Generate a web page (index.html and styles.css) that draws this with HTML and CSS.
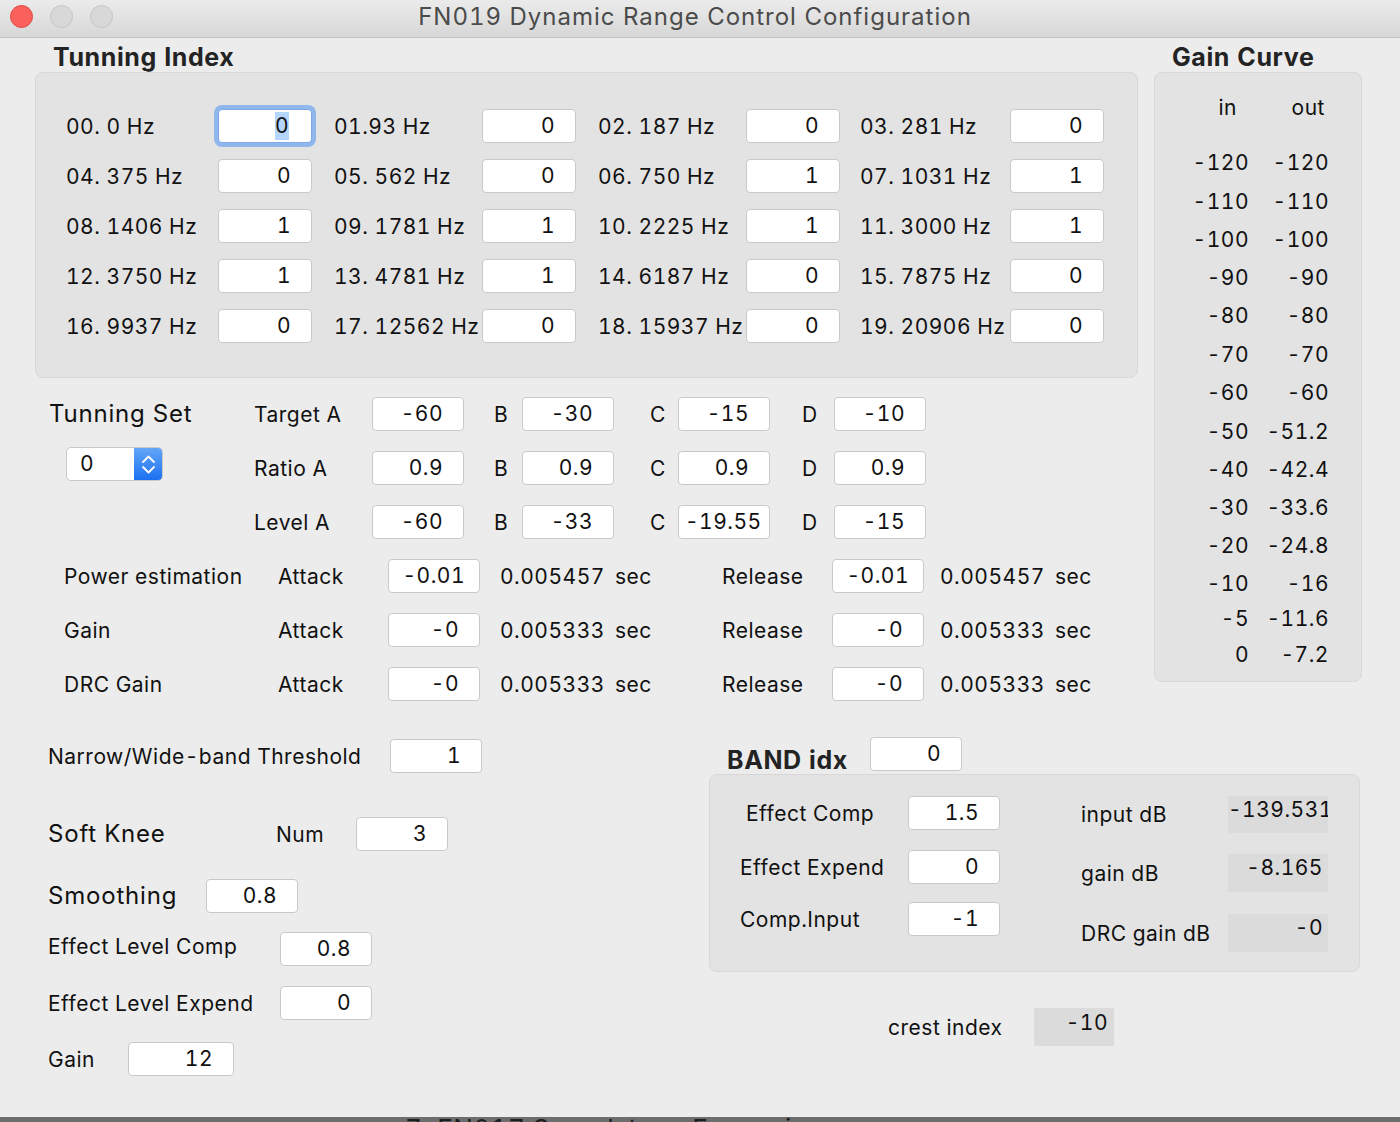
FILE: index.html
```html
<!DOCTYPE html>
<html lang="en">
<head>
<meta charset="utf-8">
<title>FN019 Dynamic Range Control Configuration</title>
<link rel="stylesheet" href="styles.css">
</head>
<body>
<div class="window">
  <div class="titlebar">
    <div class="lights"><span class="light red"></span><span class="light"></span><span class="light"></span></div>
    <div class="title">FN019 Dynamic Range Control Configuration</div>
    <div></div>
  </div>
  <div class="content">
    <div class="upper">
      <div class="upper-left">
        <h2 class="heading">Tunning Index</h2>
        <div class="panel tuning">
          <div class="tgrid">
            <span class="lbl">00. 0 Hz</span><span class="field focus"><span class="sel">0</span></span>
            <span class="lbl">01.93 Hz</span><span class="field">0</span>
            <span class="lbl">02. 187 Hz</span><span class="field">0</span>
            <span class="lbl">03. 281 Hz</span><span class="field">0</span>
            <span class="lbl">04. 375 Hz</span><span class="field">0</span>
            <span class="lbl">05. 562 Hz</span><span class="field">0</span>
            <span class="lbl">06. 750 Hz</span><span class="field">1</span>
            <span class="lbl">07. 1031 Hz</span><span class="field">1</span>
            <span class="lbl">08. 1406 Hz</span><span class="field">1</span>
            <span class="lbl">09. 1781 Hz</span><span class="field">1</span>
            <span class="lbl">10. 2225 Hz</span><span class="field">1</span>
            <span class="lbl">11. 3000 Hz</span><span class="field">1</span>
            <span class="lbl">12. 3750 Hz</span><span class="field">1</span>
            <span class="lbl">13. 4781 Hz</span><span class="field">1</span>
            <span class="lbl">14. 6187 Hz</span><span class="field">0</span>
            <span class="lbl">15. 7875 Hz</span><span class="field">0</span>
            <span class="lbl">16. 9937 Hz</span><span class="field">0</span>
            <span class="lbl">17. 12562 Hz</span><span class="field">0</span>
            <span class="lbl">18. 15937 Hz</span><span class="field">0</span>
            <span class="lbl">19. 20906 Hz</span><span class="field">0</span>
          </div>
        </div>

        <div class="tset">
          <div class="tset-left">
            <div class="big">Tunning Set</div>
            <div class="spinner">
              <span class="spin-val">0</span>
              <span class="spin-btn">
                <svg width="29" height="34" viewBox="0 0 29 34" aria-hidden="true">
                  <path d="M9 15 L14.5 9.5 L20 15" fill="none" stroke="#fff" stroke-width="1.8" stroke-linecap="round" stroke-linejoin="round"/>
                  <path d="M9 20 L14.5 25.5 L20 20" fill="none" stroke="#fff" stroke-width="1.8" stroke-linecap="round" stroke-linejoin="round"/>
                </svg>
              </span>
            </div>
          </div>
          <div class="tset-grid">
            <span class="lbl">Target A</span><span class="field">-60</span>
            <span class="lbl ltr-b">B</span><span class="field">-30</span>
            <span class="lbl ltr-c">C</span><span class="field">-15</span>
            <span class="lbl ltr-d">D</span><span class="field">-10</span>

            <span class="lbl">Ratio A</span><span class="field">0.9</span>
            <span class="lbl ltr-b">B</span><span class="field">0.9</span>
            <span class="lbl ltr-c">C</span><span class="field">0.9</span>
            <span class="lbl ltr-d">D</span><span class="field">0.9</span>

            <span class="lbl">Level A</span><span class="field">-60</span>
            <span class="lbl ltr-b">B</span><span class="field">-33</span>
            <span class="lbl ltr-c">C</span><span class="field field-left">-19.55</span>
            <span class="lbl ltr-d">D</span><span class="field">-15</span>
          </div>
        </div>

        <div class="timing">
          <span class="lbl">Power estimation</span><span class="lbl">Attack</span><span class="field tight">-0.01</span><span class="clip">0.00545759</span><span class="lbl">sec</span>
          <span class="lbl">Release</span><span class="field tight">-0.01</span><span class="clip">0.00545759</span><span class="lbl">sec</span>

          <span class="lbl">Gain</span><span class="lbl">Attack</span><span class="field">-0</span><span class="clip">0.00533333</span><span class="lbl">sec</span>
          <span class="lbl">Release</span><span class="field">-0</span><span class="clip">0.00533333</span><span class="lbl">sec</span>

          <span class="lbl">DRC Gain</span><span class="lbl">Attack</span><span class="field">-0</span><span class="clip">0.00533333</span><span class="lbl">sec</span>
          <span class="lbl">Release</span><span class="field">-0</span><span class="clip">0.00533333</span><span class="lbl">sec</span>
        </div>
      </div>

      <div class="upper-right">
        <h2 class="heading">Gain Curve</h2>
        <div class="panel gain">
          <div class="gain-head"><span class="in">in</span><span class="out">out</span></div>
          <div class="gain-rows">
            <span>-120</span><span>-120</span>
            <span>-110</span><span>-110</span>
            <span>-100</span><span>-100</span>
            <span>-90</span><span>-90</span>
            <span>-80</span><span>-80</span>
            <span>-70</span><span>-70</span>
            <span>-60</span><span>-60</span>
            <span>-50</span><span>-51.2</span>
            <span>-40</span><span>-42.4</span>
            <span>-30</span><span>-33.6</span>
            <span>-20</span><span>-24.8</span>
            <span>-10</span><span>-16</span>
            <span>-5</span><span>-11.6</span>
            <span>0</span><span>-7.2</span>
          </div>
        </div>
      </div>
    </div>

    <div class="lower">
      <div class="lower-left">
        <div class="row narrow"><span class="lbl w-narrow">Narrow/Wide-band Threshold</span><span class="field">1</span></div>
        <div class="row softknee"><span class="big w-soft">Soft Knee</span><span class="lbl w-num">Num</span><span class="field">3</span></div>
        <div class="row smoothing"><span class="big w-smooth">Smoothing</span><span class="field">0.8</span></div>
        <div class="row elc"><span class="lbl w-el lift">Effect Level Comp</span><span class="field">0.8</span></div>
        <div class="row ele"><span class="lbl w-el">Effect Level Expend</span><span class="field">0</span></div>
        <div class="row gainrow"><span class="lbl w-gain">Gain</span><span class="field wide">12</span></div>
      </div>

      <div class="lower-right">
        <div class="bandidx"><span class="band-h">BAND idx</span><span class="field">0</span></div>
        <div class="panel band-panel">
          <div class="bp-left">
            <div class="bp-row"><span class="lbl w-bp indent">Effect Comp</span><span class="field">1.5</span></div>
            <div class="bp-row r2"><span class="lbl w-bp">Effect Expend</span><span class="field">0</span></div>
            <div class="bp-row r3"><span class="lbl w-bp">Comp.Input</span><span class="field">-1</span></div>
          </div>
          <div class="bp-right">
            <div class="bp-row d1"><span class="lbl w-db">input dB</span><span class="disp">-139.531</span></div>
            <div class="bp-row d2"><span class="lbl w-db">gain dB</span><span class="disp">-8.165</span></div>
            <div class="bp-row d3"><span class="lbl w-db">DRC gain dB</span><span class="disp">-0</span></div>
          </div>
        </div>
        <div class="crest"><span class="lbl w-crest">crest index</span><span class="disp crest-box">-10</span></div>
      </div>
    </div>
  </div>
</div>
<div class="dock"><span class="dock-text">7. FN017 Soundstage Expansion</span></div>
</body>
</html>
```

FILE: styles.css
```css
* { box-sizing: border-box; }

html, body { margin: 0; padding: 0; }

body {
  width: 1400px;
  height: 1122px;
  overflow: hidden;
  background: #6d6d6d;
  font-family: "Inter", "DejaVu Sans", sans-serif;
  font-size: 21px;
  letter-spacing: 0.5px;
  font-variant-numeric: tabular-nums;
  color: #111;
}

.window {
  width: 1400px;
  height: 1117px;
  background: #ececec;
  display: flex;
  flex-direction: column;
}

/* ---------- title bar ---------- */
.titlebar {
  height: 38px;
  flex: none;
  background: linear-gradient(#ebebeb, #d7d7d7);
  border-bottom: 1px solid #c3c3c3;
  display: grid;
  grid-template-columns: 1fr auto 1fr;
  align-items: start;
}
.lights {
  display: flex;
  gap: 17px;
  padding: 5px 0 0 10px;
}
.light {
  width: 23px;
  height: 23px;
  border-radius: 50%;
  background: #d8d8d8;
  border: 1px solid #c5c5c5;
}
.light.red { background: #fc605c; border-color: #de4a44; }
.title {
  font-size: 24px;
  letter-spacing: 1px;
  line-height: 34px;
  color: #4b4b4b;
  white-space: nowrap;
  margin-left: -10px;
}

/* ---------- generic ---------- */
.content { flex: 1; }
.lbl { white-space: nowrap; }
.big { font-size: 24px; letter-spacing: 0.8px; line-height: 34px; height: 34px; white-space: nowrap; }

.heading {
  margin: 0;
  height: 34px;
  padding-top: 4px;
  line-height: 30px;
  font-size: 25px;
  letter-spacing: 0.6px;
  font-weight: 700;
  color: #232323;
  white-space: nowrap;
}

.panel {
  background: #e3e3e3;
  border: 1px solid #d8d8d8;
  border-radius: 8px;
}

.field {
  position: relative;
  display: block;
  width: 92px;
  height: 34px;
  background: #fff;
  border: 1px solid #c9c9c9;
  border-radius: 4px;
  text-align: right;
  padding-right: 20px;
  line-height: 32px;
  white-space: nowrap;
  overflow: hidden;
}
.field.tight { padding-right: 14px; }
.field.wide { width: 106px; }
.field-left { text-align: left; padding: 0 0 0 6px; }
.field.focus {
  overflow: visible;
  box-shadow: 0 0 0 4px #90b7ec;
  border-color: #7ea9e6;
  padding-right: 22px;
}
.sel { background: #b4d5fe; display: inline-block; line-height: 28px; }

/* ---------- upper ---------- */
.upper { display: flex; }
.upper-left { width: 1154px; flex: none; }
.upper-left .heading { padding-left: 53px; }

.tuning {
  margin-left: 35px;
  width: 1103px;
  height: 306px;
  padding: 36px 0 0 30px;
}
.tgrid {
  display: grid;
  grid-template-columns: 152px 116px 148px 116px 148px 114px 150px 94px;
  grid-auto-rows: 34px;
  row-gap: 16px;
  align-items: center;
}
.tgrid .field { width: 94px; }

.tset {
  display: flex;
  margin-top: 19px;
  padding-left: 49px;
}
.tset-left { width: 205px; flex: none; }
.spinner {
  display: flex;
  width: 97px;
  height: 34px;
  margin: 16px 0 0 17px;
  border: 1px solid #c9c9c9;
  border-radius: 5px;
  overflow: hidden;
  background: #fff;
}
.spin-val { flex: 1; padding-left: 13px; line-height: 32px; }
.spin-btn {
  width: 29px;
  margin: -1px -1px -1px 0;
  background: linear-gradient(#66a8f8, #1a6ff1);
  display: flex;
}
.tset-grid {
  display: grid;
  grid-template-columns: 118px 92px 58px 92px 64px 92px 64px 92px;
  grid-auto-rows: 34px;
  row-gap: 20px;
  align-items: center;
}
.ltr-b { padding-left: 30px; }
.ltr-c { padding-left: 36px; }
.ltr-d { padding-left: 32px; }

.timing {
  display: grid;
  margin-top: 20px;
  padding-left: 64px;
  grid-template-columns: 214px 110px 112px 115px 107px 110px 108px 115px auto;
  grid-auto-rows: 34px;
  row-gap: 20px;
  align-items: center;
}
.clip { width: 104px; overflow: hidden; white-space: nowrap; }

.upper-right { flex: none; width: 246px; }
.upper-right .heading { padding-left: 18px; }
.gain { width: 208px; height: 610px; padding-top: 20px; }
.gain-head {
  display: grid;
  grid-template-columns: 94px 80px;
  height: 30px;
  line-height: 30px;
  margin-bottom: 19px;
}
.gain-head span { text-align: right; }
.gain-head .in { padding-right: 12px; }
.gain-head .out { padding-right: 4px; }
.gain-rows {
  display: grid;
  grid-template-columns: 94px 80px;
  grid-template-rows: 40px 39px 37px 38px 39px 38px 39px 39px 37px 38px 39px 36px 35px 36px;
  align-items: center;
}
.gain-rows span { text-align: right; }

/* ---------- lower ---------- */
.lower { display: flex; margin-top: 36px; }
.lower-left { width: 709px; flex: none; padding-top: 2px; }
.row { display: flex; align-items: center; padding-left: 48px; }
.w-narrow { width: 342px; }
.w-soft { width: 228px; }
.w-num { width: 80px; }
.w-smooth { width: 158px; }
.w-el { width: 232px; }
.w-gain { width: 80px; }
.lift { margin-bottom: 6px; }
.softknee { margin-top: 44px; }
.smoothing { margin-top: 28px; }
.elc { margin-top: 19px; }
.ele { margin-top: 20px; }
.gainrow { margin-top: 22px; }

.lower-right { width: 651px; flex: none; }
.bandidx {
  display: flex;
  align-items: flex-start;
  height: 35px;
  padding-left: 18px;
}
.band-h {
  width: 143px;
  font-size: 25px;
  letter-spacing: 0.6px;
  font-weight: 700;
  line-height: 30px;
  margin-top: 8px;
  color: #232323;
  white-space: nowrap;
}
.band-panel {
  margin-top: 2px;
  height: 198px;
  display: flex;
  padding: 21px 0 0 30px;
}
.bp-left { width: 260px; flex: none; }
.bp-row { display: flex; align-items: center; height: 34px; }
.bp-left .r2 { margin-top: 20px; }
.bp-left .r3 { margin-top: 18px; }
.w-bp { width: 168px; }
.indent { padding-left: 6px; }
.bp-right { margin-left: 81px; }
.bp-right .d1 { height: 37px; }
.bp-right .d2 { height: 38px; margin-top: 21px; }
.bp-right .d3 { height: 38px; margin-top: 22px; }
.w-db { width: 147px; }
.disp {
  width: 100px;
  height: 100%;
  background: #dbdbdb;
  text-align: right;
  padding-right: 5px;
  line-height: 28px;
  white-space: nowrap;
  overflow: hidden;
}
.crest {
  display: flex;
  align-items: center;
  margin-top: 36px;
  padding-left: 179px;
}
.w-crest { width: 146px; }
.disp.crest-box { width: 80px; height: 38px; line-height: 30px; padding-right: 6px; }

/* ---------- dock strip ---------- */
.dock {
  height: 5px;
  background: #6d6d6d;
  overflow: hidden;
  padding-left: 405px;
}
.dock-text {
  display: block;
  font-size: 26px;
  line-height: 26px;
  color: #1e1e1e;
  margin-top: -1px;
  white-space: nowrap;
}
```
